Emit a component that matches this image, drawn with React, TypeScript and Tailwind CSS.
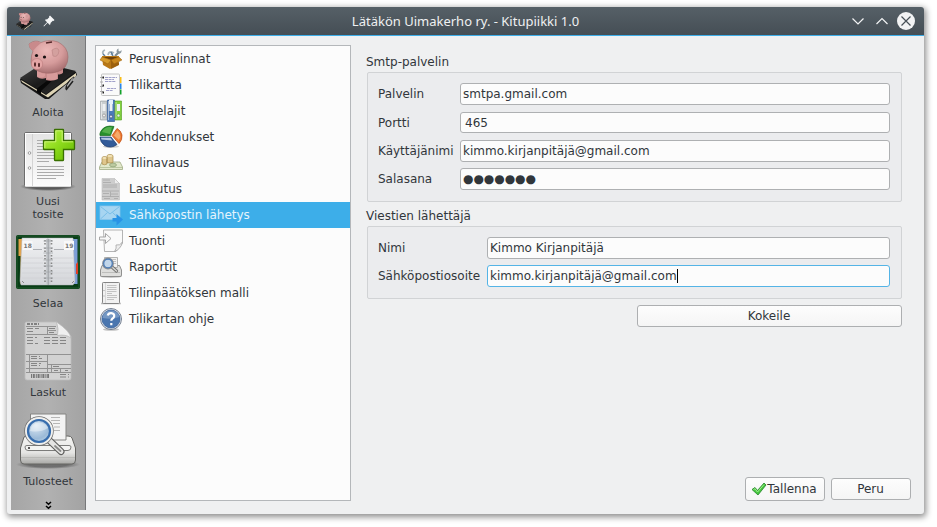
import type { ReactNode } from "react";

const SANS = "font-['DejaVu_Sans',sans-serif]";

/* ---------- shared drawings ---------- */

function PiggyArt() {
  return (
    <g>
      <defs>
        <radialGradient id="pig" cx="0.45" cy="0.3" r="0.75">
          <stop offset="0" stopColor="#ecb9b8" />
          <stop offset="0.55" stopColor="#d59b9b" />
          <stop offset="1" stopColor="#a0686a" />
        </radialGradient>
        <linearGradient id="book" x1="0" y1="0" x2="1" y2="1">
          <stop offset="0" stopColor="#4a4a4a" />
          <stop offset="0.5" stopColor="#1b1b1b" />
          <stop offset="1" stopColor="#333" />
        </linearGradient>
      </defs>
      <path d="M20 79 L43 64 L76 72 L77 75 L49 99 L45 99 L21 83Z" fill="#161616" />
      <path d="M21 80 L46 95 L76 73 L76 76 L48 97.5 L22 82Z" fill="#ddd3b4" />
      <path d="M20 78 L43 63 L76 71 L46 94Z" fill="url(#book)" />
      <path d="M37 88.5 L52 77 L55 78 L41 91 L41 95 L37 92Z" fill="#090909" />
      <path d="M66 89 Q66 83 74 77 M66 90 L73 81" stroke="#222" strokeWidth="1.5" fill="none" />
      <path d="M73 77.500 L67 86" stroke="#ccc" strokeWidth="0.7" />
      <path d="M52 68 V73 Q58 76 63 73 V65Z" fill="#b87778" />
      <path d="M37 68 V77 Q41 80 46 78 V80 Q52 82 58 79 V70 L63 66 V72 Q61 75 58 74 V66Z" fill="#c98c8c" />
      <path d="M37 68 V76 Q41 79 45 76 V68Z M47 68 V79 Q52 81 57 79 V67Z" fill="#d89b9b" />
      <path d="M29 44 Q35 39 41 42.500 Q49 39 58 42 Q68 47 68 57 Q68 69 57 72 Q46 75 38 71 Q32 69 31 62 Q31 55 33 51 Q29 48 29 44Z" fill="url(#pig)" stroke="#9a6161" strokeWidth="0.5" />
      <path d="M29 44 Q35 40 41 43 Q37 46 33 51 Q29 48 29 44Z" fill="#c98a8b" />
      <path d="M52 50 Q58 46 59 51 Q58 58 53 56Z" fill="#d3a09e" stroke="#b98182" strokeWidth="0.6" />
      <ellipse cx="37" cy="64" rx="5.700" ry="5.500" fill="#e3a5a5" stroke="#b47576" strokeWidth="0.5" />
      <ellipse cx="35" cy="64.500" rx="1" ry="2.300" fill="#512526" />
      <ellipse cx="39" cy="65" rx="1" ry="2.300" fill="#512526" />
      <circle cx="36.500" cy="55.500" r="1.600" fill="#181010" />
      <circle cx="44.500" cy="57" r="1.600" fill="#181010" />
      <path d="M46 43 L52 42" stroke="#56282a" strokeWidth="1.600" />
    </g>
  );
}

function InvoiceArt() {
  return (
    <g>
      <path d="M26 322 H57 L71 336 V378 Q71 380 69 380 H27 Q25 380 25 378 V323Z" fill="#d2d2d2" stroke="#bcbcbc" strokeWidth="0.8" />
      <path d="M56.500 322 Q59 329 57.500 335.500 Q66 334 71 338 Q70 331 56.500 322Z" fill="#efefef" stroke="#b4b4b4" strokeWidth="0.7" />
      <path d="M26 326.500 H56 M26 334.500 H57 M47.500 326.500 V334 M47 330.500 H56 M26 354.500 H71 M26 361.500 H47 M26 368.500 H71 M26 372.500 H71 M47.500 354.500 V372 M29.500 354.500 V372 M47 364.500 H71 M51.500 364.500 V372 M60.500 368.500 V372" stroke="#929292" strokeWidth="1" fill="none" />
      <path d="M27 324 H39" stroke="#808080" strokeWidth="2" strokeDasharray="3 1 2 1" />
      <path d="M27 328.500 H39 M27 331.500 H33 M49 328.500 H55 M49 332.500 H54 M27 337.500 H37 M27 340.500 H33 M27 343.500 H38 M44 337.500 H67 M44 340.500 H67 M44 343.500 H67 M31 356.500 H40 M31 358.500 H42 M31 363.500 H41 M31 365.500 H40 M53 366.500 H60 M54 370.500 H58 M65 370.500 H68 M60 374.500 H69 M60 377 H69" stroke="#858585" strokeWidth="1" strokeDasharray="6 2" fill="none" />
      <path d="M31 376 H49" stroke="#777" strokeWidth="4" strokeDasharray="1 0.8 2 1" />
    </g>
  );
}

function PrinterArt() {
  return (
    <g>
      <defs>
        <linearGradient id="prn" x1="0" y1="0" x2="0" y2="1">
          <stop offset="0" stopColor="#f5f5f3" />
          <stop offset="0.6" stopColor="#e5e5e3" />
          <stop offset="1" stopColor="#a9a9a6" />
        </linearGradient>
        <radialGradient id="lens" cx="0.4" cy="0.3" r="0.8">
          <stop offset="0" stopColor="#dbe7f2" />
          <stop offset="0.6" stopColor="#9bbad8" />
          <stop offset="1" stopColor="#c9dcec" />
        </radialGradient>
        <radialGradient id="prnShadow">
          <stop offset="0.6" stopColor="#444" stopOpacity="0.6" />
          <stop offset="1" stopColor="#444" stopOpacity="0" />
        </radialGradient>
      </defs>
      <ellipse cx="48" cy="464.500" rx="32" ry="4.500" fill="url(#prnShadow)" />
      <path d="M24 437 Q25 436 28 436 H68 Q71 436 72 438 L75.500 448 V460 Q75.500 464 72 464 H24 Q20.500 464 20.500 460 V448Z" fill="url(#prn)" stroke="#666663" strokeWidth="1" />
      <path d="M25 447 Q25 445.500 27 445.500 H69 Q71 445.500 71 447 Q71 450.500 68 450.500 H28 Q25 450.500 25 447Z" fill="#f4f4f2" stroke="#6f6f6d" strokeWidth="0.9" />
      <path d="M21 457.500 H75" stroke="#b9b9b6" strokeWidth="1" />
      <path d="M30.500 414 H66 V440 H30.500Z" fill="#f3f3f3" stroke="#858583" strokeWidth="1" />
      <path d="M51 417.500 H60 M51 420.500 H60 M53 423.500 H60 M54 427 H60 M54 430.500 H60" stroke="#b6b6b6" strokeWidth="1.200" />
      <path d="M50 441 L61 451.500" stroke="#60605e" strokeWidth="7" strokeLinecap="round" />
      <path d="M50 441 L61 451.500" stroke="#e5e5e3" strokeWidth="4.800" strokeLinecap="round" />
      <path d="M55 446 L60.500 451" stroke="#8a8a88" strokeWidth="1.800" strokeLinecap="round" />
      <circle cx="39" cy="431" r="13.500" fill="url(#lens)" stroke="#6d6d6d" strokeWidth="2.500" />
      <circle cx="39" cy="431" r="13" fill="none" stroke="#f0f0ee" strokeWidth="2" />
      <circle cx="39" cy="431" r="11" fill="none" stroke="#386dad" strokeWidth="2.200" />
      <path d="M30 431 Q31 423 39 422.500 Q46 423 48 428 Q40 433 30 431Z" fill="#fff" opacity="0.4" />
      <circle cx="29" cy="448" r="1.100" fill="#333" />
    </g>
  );
}

function DocumentArt() {
  return (
    <g>
      <defs>
        <linearGradient id="doc" x1="0" y1="0" x2="0" y2="1">
          <stop offset="0" stopColor="#e4e4e4" />
          <stop offset="1" stopColor="#fcfcfc" />
        </linearGradient>
        <radialGradient id="docShadow">
          <stop offset="0.6" stopColor="#333" stopOpacity="0.7" />
          <stop offset="1" stopColor="#333" stopOpacity="0" />
        </radialGradient>
      </defs>
      <ellipse cx="48" cy="186.500" rx="28" ry="4.500" fill="url(#docShadow)" />
      <rect x="24.500" y="132.500" width="47" height="54.500" rx="1.500" fill="url(#doc)" stroke="#6c6c6c" />
      <rect x="25.500" y="133.500" width="45" height="52.500" fill="none" stroke="#fff" />
      <path d="M32.500 134 V186" stroke="#ccc" strokeWidth="0.8" />
      <path
        d="M37 140.500 H63 M37 143.500 H63 M37 146.500 H63 M37 149.500 H63 M37 152.500 H63 M37 155.500 H63 M37 158.500 H63 M37 161.500 H49 M37 166.500 H64 M37 169.500 H64 M37 172.500 H64 M37 175.500 H64 M37 178.500 H56"
        stroke="#ababab"
        strokeWidth="1"
      />
      <circle cx="29.500" cy="153" r="1.300" fill="#fff" stroke="#888" strokeWidth="0.8" />
      <circle cx="29.500" cy="168" r="1.300" fill="#fff" stroke="#888" strokeWidth="0.8" />
    </g>
  );
}

/* ---------- sidebar ---------- */

function NewVoucherArt() {
  return (
    <g>
      <defs>
        <linearGradient id="plus" x1="0" y1="0" x2="1" y2="1">
          <stop offset="0" stopColor="#b9f04a" />
          <stop offset="0.5" stopColor="#8ddb1c" />
          <stop offset="1" stopColor="#60b400" />
        </linearGradient>
      </defs>
      <DocumentArt />
      <path
        d="M55 129.500 H63 Q63.500 129.500 63.500 130 V140.500 H74 Q74.500 140.500 74.500 141 V149 Q74.500 149.500 74 149.500 H63.500 V160 Q63.500 160.500 63 160.500 H55 Q54.500 160.500 54.500 160 V149.500 H44 Q43.500 149.500 43.500 149 V141 Q43.500 140.500 44 140.500 H54.500 V130 Q54.500 129.500 55 129.500Z"
        fill="url(#plus)"
        stroke="#397000"
        strokeWidth="1.300"
      />
      <path d="M44.800 148 V141.800 H55.800 V130.800 H62.200 V141.800 H73" fill="none" stroke="#d0f77d" strokeWidth="0.900" />
    </g>
  );
}

function PlannerArt() {
  return (
    <g>
      <defs>
        <linearGradient id="leaf" x1="0" y1="0" x2="0" y2="1">
          <stop offset="0" stopColor="#f0f1f3" />
          <stop offset="1" stopColor="#d3d5d9" />
        </linearGradient>
      </defs>
      <rect x="16" y="235" width="64" height="54" rx="2" fill="#083d16" />
      <rect x="17" y="236" width="62" height="52" rx="1.500" fill="none" stroke="#2b6536" strokeWidth="0.700" />
      <path d="M18.500 239 H24 V284 H20.500 V256 H18.500Z" fill="#e3a34a" />
      <path d="M70 239 H77.500 V284 H70Z" fill="#7d9ed8" />
      <path d="M76 264 L78 262 V274 H76Z" fill="#e03d25" />
      <path d="M22 238 H48 V285 H21 L20 281Z" fill="url(#leaf)" stroke="#b2b4b8" strokeWidth="0.500" />
      <path d="M48 238 H73 L75 282 L73 285 H48Z" fill="url(#leaf)" stroke="#b2b4b8" strokeWidth="0.500" />
      <rect x="46" y="239" width="4.500" height="46" fill="#c9ccd0" />
      <path d="M22 258 H43 M22 263 H43 M22 268 H43 M22 273 H43 M22 278 H43 M53 258 H74 M53 263 H74 M53 268 H74 M53 273 H74 M53 278 H74" stroke="#d0d2d5" strokeWidth="0.800" />
      <path d="M33 249.500 H42 M54 249.500 H64" stroke="#adb0b5" strokeWidth="1" />
      <rect x="22.500" y="241" width="10" height="9" fill="#f9f9f9" />
      <rect x="64" y="241" width="10" height="9" fill="#f9f9f9" />
      <text x="23.500" y="248" fontSize="6" fontWeight="bold" fill="#777">18</text>
      <text x="65" y="248" fontSize="6" fontWeight="bold" fill="#777">19</text>
      <path d="M45 240 V284 M51.500 240 V284" stroke="#858585" strokeWidth="1.600" strokeDasharray="1.500 1.500 1.500 3" />
      <path d="M43.500 241 H53 M43.500 248 H53 M43.500 253 H53 M43.500 260 H53 M43.500 266 H53 M43.500 272 H53 M43.500 278 H53" stroke="#a5a8ac" strokeWidth="0.800" />
      <path d="M48.200 239 V285" stroke="#9b9ea3" strokeWidth="1" />
      <path d="M22 281 L24 283 M72 283 L74 281" stroke="#777" strokeWidth="0.800" />
    </g>
  );
}

function SideItem({ label, viewBox, className, children }: { label: ReactNode; viewBox: string; className: string; children: ReactNode }) {
  return (
    <div className={`flex shrink-0 flex-col items-center ${className}`}>
      <svg viewBox={viewBox} className="h-16 w-16 shrink-0">
        {children}
      </svg>
      <div className="mt-1 text-center text-[11px] leading-[13px] text-[#31363b]">{label}</div>
    </div>
  );
}

function Sidebar() {
  return (
    <div className="flex w-[75px] shrink-0 flex-col overflow-hidden border-r border-[#77787a] bg-linear-to-r from-[#a5a5a5] via-[#b1b1b1] to-[#a3a3a3] pt-[2px]">
      <SideItem label="Aloita" viewBox="16 38 64 64" className="h-[89px]"><PiggyArt /></SideItem>
      <SideItem label={<>Uusi<br />tosite</>} viewBox="16 127 64 64" className="h-[102px]"><NewVoucherArt /></SideItem>
      <SideItem label="Selaa" viewBox="16 229 64 64" className="h-[89px]"><PlannerArt /></SideItem>
      <SideItem label="Laskut" viewBox="16 318 64 64" className="h-[89px]"><InvoiceArt /></SideItem>
      <SideItem label="Tulosteet" viewBox="16 407 64 64" className="h-[89px]"><PrinterArt /></SideItem>
      <svg viewBox="0 0 7 9" className="mt-[5px] ml-[34px] h-[9px] w-[7px] shrink-0" fill="none" stroke="#000" strokeWidth="1.500">
        <path d="M1 1 L3.500 3.300 L6 1 M1 5 L3.500 7.300 L6 5" />
      </svg>
    </div>
  );
}

/* ---------- list icons ---------- */

const boxIcon = (
  <>
    <path d="M4 7 Q3 4 6 3 M9 8 Q10 3.500 14 5.500 L12 8" fill="none" stroke="#a9b5bc" strokeWidth="1.800" />
    <path d="M16 9 L19.500 5.500" stroke="#7f8c95" strokeWidth="2.200" />
    <path d="M18 6 Q16.500 3 19.500 1.500 L19.500 3.800 L21 4.500 L22.500 3 Q23 6.500 19.500 7Z" fill="#8b989f" />
    <path d="M4 7 L6 9 M12 5 L14 9" stroke="#5f7f9c" strokeWidth="1.500" />
    <path d="M3 9 H20 L19 18 L11 22 L4 18Z" fill="#b87716" />
    <path d="M4 10 H19 L12 13Z" fill="#6e410a" />
    <path d="M3 10 L12 13 L9 17 L1 13Z" fill="#d59a2c" stroke="#9b610e" strokeWidth="0.500" />
    <path d="M20 10 L12 13 L15 17 L23 13Z" fill="#c8861d" stroke="#9b610e" strokeWidth="0.500" />
    <path d="M12 13 V22 L20 18 V15 L15 17Z" fill="#9c600e" />
  </>
);

const notebookIcon = (
  <>
    <rect x="19" y="4" width="3.500" height="6" fill="#f8bd17" />
    <rect x="19" y="10.500" width="3.500" height="5.500" fill="#2785ea" />
    <rect x="19" y="16.500" width="3.500" height="5" fill="#13a12b" />
    <rect x="2.500" y="1" width="18" height="21.500" rx="1" fill="#fafafa" stroke="#c4c4c4" />
    <path d="M6 4.500 H18 M6 6.500 H15 M6 8.500 H17 M8 15.500 H17 M7 17.500 H14" stroke="#9696c4" strokeWidth="0.900" strokeDasharray="3 0.600" />
    <path d="M1 4.500 H4 M1 9 H4 M1 13.500 H4 M1 18.500 H4" stroke="#aaa" />
    <path d="M3.500 4.500 H5 M3.500 12.500 H5 M3.500 19.500 H5" stroke="#222" strokeWidth="2" />
  </>
);

const bindersIcon = (
  <>
    <path d="M1.500 2 H8 V21 H1.500Z" fill="#c8cdcf" stroke="#959b9e" strokeWidth="0.600" />
    <path d="M8.500 1 H15.500 V22.500 H8.500Z" fill="#4a7aba" stroke="#28508e" strokeWidth="0.600" />
    <path d="M16 2 H22.500 V21 H16Z" fill="#82d03f" stroke="#4e9c1b" strokeWidth="0.600" />
    <path d="M2.500 3 V20 M9.500 2 V21 M17 3 V20" stroke="#fff" opacity="0.500" />
    <path d="M3.500 5 H6.500 V12 H3.500Z M10.500 4 H13.500 V12 H10.500Z M18 5 H21 V12 H18Z" fill="#eef1f3" />
    <path d="M10 1 H14 V5 H10Z" fill="#e6f1fb" />
    <circle cx="5" cy="16.500" r="1.500" fill="#eee" stroke="#888" strokeWidth="0.600" />
    <circle cx="12" cy="17.500" r="1.500" fill="#dde" stroke="#346" strokeWidth="0.600" />
    <circle cx="19.500" cy="16.500" r="1.500" fill="#eee" stroke="#5a4" strokeWidth="0.600" />
  </>
);

const pieIcon = (
  <>
    <ellipse cx="12" cy="21.500" rx="8" ry="1.500" fill="#999" opacity="0.500" />
    <path d="M11.500 10.500 L15 1.500 Q6 -0.500 2 6 Q0.500 8.500 1 10.500Z" fill="#278f2c" stroke="#12681a" strokeWidth="0.700" />
    <path d="M11 9 L13 2.200 Q6 1 3 7Z" fill="#74c663" opacity="0.600" />
    <path d="M13 10.500 L18 3.500 Q22 5.500 23 10 Q23.500 15 20 18.500Z" fill="#ed7c34" stroke="#bb4910" strokeWidth="0.700" />
    <path d="M15 10.500 L18.500 5.500 Q21 7.500 21.500 12 L20 15Z" fill="#f7b578" opacity="0.800" />
    <path d="M1 12 H12 L18 19.500 Q12 24 5.500 20.500 Q1 17 1 12Z" fill="#335b99" stroke="#1b396d" strokeWidth="0.700" />
    <path d="M2 12.700 H11.500 L13.500 15.500 Q7 15 2.500 14.500Z" fill="#c3d4ea" opacity="0.900" />
  </>
);

const moneyIcon = (
  <>
    <path d="M3 11 H21 L23.500 16 V18.500 H0.500 V16Z" fill="#e2e8cb" stroke="#93a175" strokeWidth="0.700" />
    <path d="M0.500 16.500 H23.500" stroke="#a9b78e" strokeWidth="0.700" />
    <ellipse cx="14" cy="14" rx="3.500" ry="1.800" fill="#bccaa0" stroke="#82986c" strokeWidth="0.600" />
    <path d="M3 7 Q3 5.500 5.500 5.500 Q8 5.500 8 7 V13 Q5.500 14.500 3 13Z M8 5 Q8 3.500 11 3.500 Q14 3.500 14 5 V11.500 Q11 12.500 8 11.500Z" fill="#dfc68c" stroke="#a88b4b" strokeWidth="0.700" />
    <ellipse cx="11" cy="5" rx="2.600" ry="1.100" fill="#f2e3b8" />
    <ellipse cx="5.500" cy="7" rx="2.100" ry="0.900" fill="#f2e3b8" />
  </>
);

const billIcon = (
  <>
    <path d="M3 1.500 H15.500 L20.500 6.500 V23 H3Z" fill="#cdcdcd" stroke="#bcbcbc" strokeWidth="0.600" />
    <path d="M15.500 1.500 V6.500 H20.500Z" fill="#ececec" stroke="#bbb" strokeWidth="0.500" />
    <path d="M4 3 H11 M4 5.500 H12 M4 8 H18 M4 10 H18 M3 14 H20 M4 16.500 H10 M12 17 H19 M3 19.500 H20 M5 21.500 H11 M15 21.500 H19 M11.500 14.500 V20" stroke="#acacac" strokeWidth="0.900" />
  </>
);

const mailIcon = (
  <>
    <rect x="1" y="3" width="20" height="13.500" fill="#a7d5f1" stroke="#8dc6ea" strokeWidth="0.700" />
    <path d="M1.500 16 L8.500 9.500 M20.500 16 L13.500 9.500 M1.500 3.500 L11 11 L20.500 3.500" fill="none" stroke="#74bbe6" strokeWidth="0.900" />
    <path d="M13.500 15 H17.500 V11 L24 16.500 L17.500 22.500 V18.500 H13.500Z" fill="#2893e6" />
  </>
);

const importIcon = (
  <>
    <path d="M4.500 1 H23.500 V14 L17 22.500 H5.500Z" fill="#fafafa" stroke="#ababab" strokeWidth="0.900" />
    <path d="M23.500 13 Q21 17 17 16 Q18 19 15.500 22.500 Q22 20 23.500 13Z" fill="#eee" stroke="#a3a3a3" strokeWidth="0.800" />
    <path d="M0.500 8 H6.500 V4.500 L12 9.500 L6.500 14.500 V11 H0.500Z" fill="#f8f8f8" stroke="#9d9d9d" strokeWidth="0.900" />
  </>
);

const reportIcon = (
  <>
    <ellipse cx="12" cy="21.500" rx="11" ry="1.500" fill="#777" opacity="0.400" />
    <path d="M3 10.500 H20.500 L22.500 15 V20 Q22.500 21.500 21 21.500 H2.500 Q1.500 21.500 1.500 20 V15Z" fill="#dededc" stroke="#868684" strokeWidth="0.900" />
    <path d="M3 17.500 H21" stroke="#b5b5b3" strokeWidth="0.800" />
    <path d="M5.500 2.500 H18.500 V12.500 H5.500Z" fill="#f1f1f1" stroke="#a2a2a0" strokeWidth="0.800" />
    <path d="M13.500 4.500 H17 M14 6.500 H17 M14 8.500 H17" stroke="#b5b5b5" strokeWidth="0.800" />
    <path d="M13 12 L17.500 16" stroke="#6f6f6d" strokeWidth="3.200" strokeLinecap="round" />
    <path d="M13 12 L17.500 16" stroke="#d6d6d4" strokeWidth="1.500" strokeLinecap="round" />
    <circle cx="9" cy="8.500" r="5" fill="#c2d6ea" stroke="#8b8f94" strokeWidth="1.800" />
    <circle cx="9" cy="8.500" r="4.300" fill="none" stroke="#4f7fba" strokeWidth="1.300" />
  </>
);

const pageIcon = (
  <>
    <path d="M2 22.500 H22" stroke="#888" strokeWidth="1.500" opacity="0.500" />
    <rect x="3.500" y="1.500" width="17" height="21" rx="0.800" fill="#f1f1f1" stroke="#858585" strokeWidth="1" />
    <path d="M6.500 2 V22" stroke="#d2d2d2" strokeWidth="0.800" />
    <path d="M8 4.500 H17.500 M8 6.500 H17.500 M8 8.500 H17.500 M8 10.500 H17.500 M8 12.500 H13 M8 14.500 H18 M8 16.500 H18 M8 18.500 H15" stroke="#bcbcbc" strokeWidth="0.900" />
    <path d="M5 9 V10 M5 14.500 V15.500" stroke="#999" strokeWidth="1" />
  </>
);

const helpIcon = (
  <>
    <ellipse cx="12" cy="22.500" rx="8" ry="1.300" fill="#888" opacity="0.500" />
    <circle cx="12" cy="12" r="10.500" fill="#e7ebf0" stroke="#667386" strokeWidth="0.900" />
    <circle cx="12" cy="12" r="9" fill="#4a76af" stroke="#315c96" strokeWidth="0.700" />
    <path d="M3.500 11 Q4 4 12 3.500 Q19 4 20.500 10 Q13 13 3.500 11Z" fill="#9eb8d7" opacity="0.500" />
    <path d="M8.700 8.500 Q9.500 6 12.200 6.200 Q15.500 6.500 15.200 9.200 Q15 10.800 13.300 11.700 Q12.300 12.300 12.300 13.800 M12.300 16 V18.300" fill="none" stroke="#fff" strokeWidth="2.200" />
  </>
);

type Entry = { label: string; icon: ReactNode; selected?: boolean };

const entries: Entry[] = [
  { label: "Perusvalinnat", icon: boxIcon },
  { label: "Tilikartta", icon: notebookIcon },
  { label: "Tositelajit", icon: bindersIcon },
  { label: "Kohdennukset", icon: pieIcon },
  { label: "Tilinavaus", icon: moneyIcon },
  { label: "Laskutus", icon: billIcon },
  { label: "Sähköpostin lähetys", icon: mailIcon, selected: true },
  { label: "Tuonti", icon: importIcon },
  { label: "Raportit", icon: reportIcon },
  { label: "Tilinpäätöksen malli", icon: pageIcon },
  { label: "Tilikartan ohje", icon: helpIcon },
];

function SettingsList() {
  return (
    <div className="h-[456px] w-[256px] shrink-0 border border-[#b4b7ba] bg-[#fcfcfc]">
      {entries.map((e) => (
        <div
          key={e.label}
          className={`flex h-[26px] items-center gap-[6px] pl-[3px] ${e.selected ? "bg-[#3daee9] text-[#e6f4fc]" : ""}`}
        >
          <svg viewBox="0 0 24 24" className="h-6 w-6 shrink-0">
            {e.icon}
          </svg>
          <span className="pb-px">{e.label}</span>
        </div>
      ))}
    </div>
  );
}

/* ---------- form ---------- */

function Field({ label, value, labelClass, className = "", inputClass = "h-[22px] pl-[2px] border-[#aeb0b2]", caret = false }: {
  label: string;
  value: string;
  labelClass: string;
  className?: string;
  inputClass?: string;
  caret?: boolean;
}) {
  return (
    <div className={`flex items-center ${className}`}>
      <div className={`shrink-0 ${labelClass}`}>{label}</div>
      <div className={`flex flex-1 items-center rounded-[3px] border bg-[#fcfcfc] ${inputClass}`}>
        <span>{value}</span>
        {caret && <span className="h-[14px] w-px bg-black" />}
      </div>
    </div>
  );
}

const GROUP = "rounded-[2px] border border-[#d1d3d5] bg-[#ebecee] pr-[11px] pl-[10px]";
const BUTTON = "flex items-center justify-center rounded-[3px] border border-[#adafb1] bg-linear-to-b from-[#fdfdfd] to-[#f5f5f5]";

function MailForm() {
  return (
    <div className="flex min-w-0 flex-1 flex-col pt-[9px]">
      <div className="-ml-px h-[18px] leading-[16px]">Smtp-palvelin</div>
      <div className={`h-[130px] pt-[10px] ${GROUP}`}>
        <Field label="Palvelin" value="smtpa.gmail.com" labelClass="w-[82px]" />
        <Field label="Portti" value="465" labelClass="w-[82px]" className="mt-[7px]" inputClass="h-[21px] pl-1 border-[#aeb0b2]" />
        <Field label="Käyttäjänimi" value="kimmo.kirjanpitäjä@gmail.com" labelClass="w-[82px]" className="mt-[7px]" />
        <Field label="Salasana" value="●●●●●●●" labelClass="w-[82px]" className="mt-[6px]" inputClass="h-[22px] pl-[2px] border-[#aeb0b2] tracking-[-0.05px] text-[12px]" />
      </div>
      <div className="mt-[6px] -ml-px h-[18px] leading-[16px]">Viestien lähettäjä</div>
      <div className={`h-[73px] pt-[10px] ${GROUP}`}>
        <Field label="Nimi" value="Kimmo Kirjanpitäjä" labelClass="w-[109px]" />
        <Field label="Sähköpostiosoite" value="kimmo.kirjanpitäjä@gmail.com" labelClass="w-[109px]" className="mt-[6px]" inputClass="h-[22px] pl-[2px] border-[#54b4e6]" caret />
      </div>
      <div className={`mt-[6px] ml-auto h-[22px] w-[265px] pr-px ${BUTTON}`}>Kokeile</div>
    </div>
  );
}

function TitleBar() {
  return (
    <div className="flex h-7 shrink-0 items-center rounded-t-[3px] bg-linear-to-b from-[#566067] to-[#454e55] text-[#eff0f1]">
      <svg viewBox="16 38 64 64" className="ml-[8px] h-[19px] w-[19px]"><PiggyArt /></svg>
      <svg viewBox="0 0 12 12" className="ml-[9px] h-3 w-3" fill="#f5f6f7">
        <path d="M7 0.500 L11.500 5 L10.500 6 L9.800 5.700 L7.500 8 Q7.800 9 6.800 9.900 L4.600 7.700 L1 11.500 L0.500 11 L4.100 7.200 L1.900 5 Q3 4 4 4.400 L6.300 2.200 L6 1.500Z" />
      </svg>
      <div className="flex-1 pl-[27px] text-center font-['Noto_Sans',sans-serif] text-[13px]">Lätäkön Uimakerho ry. - Kitupiikki 1.0</div>
      <svg viewBox="0 0 66 18" className="mr-[9px] h-[18px] w-[66px]" fill="none" stroke="#f2f3f4" strokeWidth="1.200">
        <path d="M3.500 6.500 L9 12 L14.500 6.500 M27.500 12 L33 6.500 L38.500 12" />
        <circle cx="57" cy="9" r="9" fill="#f2f3f4" stroke="none" />
        <path d="M52.500 4.500 L61.500 13.500 M61.500 4.500 L52.500 13.500" stroke="#475057" />
      </svg>
    </div>
  );
}

export default function App() {
  return (
    <div className={`h-[527px] w-[937px] overflow-hidden bg-white pt-[7px] pl-[7px] text-[12px] leading-[16px] whitespace-nowrap text-[#31363b] ${SANS}`}>
      <div className="flex h-[507px] w-[917px] flex-col rounded-[3px] bg-[#eff0f1] shadow-[1px_2px_6px_1px_rgba(0,0,0,0.45)]">
        <TitleBar />
        <div className="h-px shrink-0 bg-[#3daee9]" />
        <div className="flex h-[474px] pl-1">
          <Sidebar />
          <div className="flex flex-1 pt-[9px] pl-[9px]">
            <SettingsList />
            <div className="ml-[16px] flex w-[544px] flex-col">
              <div className="flex w-[535px]"><MailForm /></div>
              <div className="mt-auto mb-[9px] flex items-center justify-end gap-[6px]">
                <div className={`h-6 w-20 pr-[2px] ${BUTTON}`}>
                  <svg viewBox="0 0 16 16" className="h-4 w-4">
                    <path d="M1 8.500 L4 6.500 L6.500 9.500 L13 2 L15 4 L7 14Z" fill="#46c83e" stroke="#258329" strokeWidth="0.800" />
                    <path d="M2.500 8.500 L4 7.700 L6.500 11 L13 3.500" fill="none" stroke="#a0ec8d" strokeWidth="1" />
                  </svg>
                  Tallenna
                </div>
                <div className={`h-[22px] w-20 pr-px ${BUTTON}`}>Peru</div>
              </div>
            </div>
          </div>
        </div>
      </div>
    </div>
  );
}
